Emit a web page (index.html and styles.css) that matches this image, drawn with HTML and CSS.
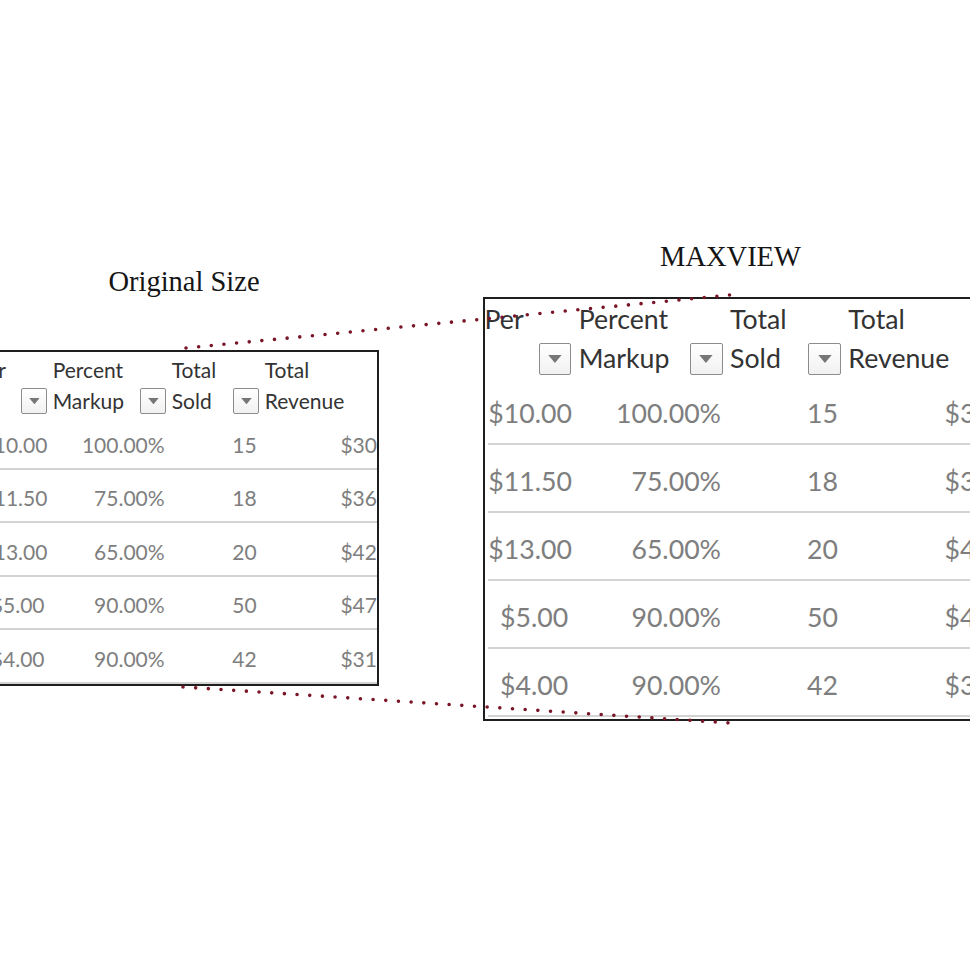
FILE: index.html
```html
<!DOCTYPE html>
<html lang="en">
<head>
<meta charset="utf-8">
<title>Original Size vs MAXVIEW</title>
<link rel="stylesheet" href="styles.css">
</head>
<body>
<div class="stage">
  <figure class="figure figure--original">
    <figcaption class="caption">Original Size</figcaption>
    <div class="sheet sheet--small">
      <div class="sheet__head">
        <div class="hcell"><span class="hcell__line"><span class="hcell__clip">Per</span></span><span class="hcell__line"><span class="dd"><svg viewBox="0 0 10 6"><path d="M0 0H10L5 6Z"/></svg></span></span></div>
        <div class="hcell"><span class="hcell__line">Percent</span><span class="hcell__line">Markup<span class="dd"><svg viewBox="0 0 10 6"><path d="M0 0H10L5 6Z"/></svg></span></span></div>
        <div class="hcell"><span class="hcell__line">Total</span><span class="hcell__line">Sold<span class="dd"><svg viewBox="0 0 10 6"><path d="M0 0H10L5 6Z"/></svg></span></span></div>
        <div class="hcell"><span class="hcell__line">Total</span><span class="hcell__line">Revenue<span class="dd"><svg viewBox="0 0 10 6"><path d="M0 0H10L5 6Z"/></svg></span></span></div>
      </div>
      <div class="sheet__row"><span class="cell cell--c1">$10.00</span><span class="cell cell--c2">100.00%</span><span class="cell cell--c3">15</span><span class="cell cell--c4">$300.00</span></div>
      <div class="sheet__row"><span class="cell cell--c1">$11.50</span><span class="cell cell--c2">75.00%</span><span class="cell cell--c3">18</span><span class="cell cell--c4">$362.25</span></div>
      <div class="sheet__row"><span class="cell cell--c1">$13.00</span><span class="cell cell--c2">65.00%</span><span class="cell cell--c3">20</span><span class="cell cell--c4">$429.00</span></div>
      <div class="sheet__row"><span class="cell cell--c1">$5.00</span><span class="cell cell--c2">90.00%</span><span class="cell cell--c3">50</span><span class="cell cell--c4">$475.00</span></div>
      <div class="sheet__row"><span class="cell cell--c1">$4.00</span><span class="cell cell--c2">90.00%</span><span class="cell cell--c3">42</span><span class="cell cell--c4">$319.20</span></div>
    </div>
  </figure>

  <figure class="figure figure--maxview">
    <figcaption class="caption">MAXVIEW</figcaption>
    <div class="sheet sheet--large">
      <div class="sheet__head">
        <div class="hcell"><span class="hcell__line"><span class="hcell__clip">Per</span></span><span class="hcell__line"><span class="dd"><svg viewBox="0 0 10 6"><path d="M0 0H10L5 6Z"/></svg></span></span></div>
        <div class="hcell"><span class="hcell__line">Percent</span><span class="hcell__line">Markup<span class="dd"><svg viewBox="0 0 10 6"><path d="M0 0H10L5 6Z"/></svg></span></span></div>
        <div class="hcell"><span class="hcell__line">Total</span><span class="hcell__line">Sold<span class="dd"><svg viewBox="0 0 10 6"><path d="M0 0H10L5 6Z"/></svg></span></span></div>
        <div class="hcell"><span class="hcell__line">Total</span><span class="hcell__line">Revenue<span class="dd"><svg viewBox="0 0 10 6"><path d="M0 0H10L5 6Z"/></svg></span></span></div>
      </div>
      <div class="sheet__row"><span class="cell cell--c1">$10.00</span><span class="cell cell--c2">100.00%</span><span class="cell cell--c3">15</span><span class="cell cell--c4">$300.00</span></div>
      <div class="sheet__row"><span class="cell cell--c1">$11.50</span><span class="cell cell--c2">75.00%</span><span class="cell cell--c3">18</span><span class="cell cell--c4">$362.25</span></div>
      <div class="sheet__row"><span class="cell cell--c1">$13.00</span><span class="cell cell--c2">65.00%</span><span class="cell cell--c3">20</span><span class="cell cell--c4">$429.00</span></div>
      <div class="sheet__row"><span class="cell cell--c1">$5.00</span><span class="cell cell--c2">90.00%</span><span class="cell cell--c3">50</span><span class="cell cell--c4">$475.00</span></div>
      <div class="sheet__row"><span class="cell cell--c1">$4.00</span><span class="cell cell--c2">90.00%</span><span class="cell cell--c3">42</span><span class="cell cell--c4">$319.20</span></div>
    </div>
  </figure>

  <svg class="connectors" viewBox="0 0 970 971" aria-hidden="true">
    <line x1="186" y1="348" x2="730" y2="295"/>
    <line x1="183" y1="687" x2="730" y2="723"/>
  </svg>
</div>
</body>
</html>
```

FILE: styles.css
```css
* { box-sizing: border-box; }

html, body {
  margin: 0;
  padding: 0;
  background: #ffffff;
}

.stage {
  position: relative;
  width: 970px;
  height: 971px;
  overflow: hidden;
  background: #ffffff;
}

.figure {
  position: absolute;
  margin: 0;
}

.figure--original {
  left: -23px;
  top: 266px;
  width: 402px;
}

.figure--maxview {
  left: 483px;
  top: 241px;
  width: 509px;
}

.caption {
  font-family: "Liberation Serif", "DejaVu Serif", serif;
  font-size: 28.5px;
  line-height: 32px;
  color: #151515;
  text-align: center;
}

.figure--original .caption {
  padding-left: 12px;
  margin-bottom: 52px;
}

.figure--maxview .caption {
  padding-right: 14px;
  margin-bottom: 24px;
}

.sheet {
  border: 2px solid #1e1e1e;
  overflow: hidden;
  font-family: Lato, "Open Sans", sans-serif;
  background: #ffffff;
}

.sheet--small {
  font-size: 21px;
}

.sheet--large {
  font-size: 26.7px;
  padding-bottom: 2px;
}

.sheet__head,
.sheet__row {
  display: grid;
  grid-template-columns: 3.19em 5.67em 4.43em 8em;
  margin: 0 0.12em;
  width: 21.3em;
}

.sheet__head {
  height: 3.05em;
  padding-top: 0.12em;
  color: #333333;
  line-height: 1.476;
}

.sheet--large .sheet__head {
  height: 2.92em;
  padding-top: 0.04em;
}

.hcell {
  display: flex;
  flex-direction: column;
  padding-left: 0.2em;
  padding-right: 0.08em;
  white-space: nowrap;
}

.sheet__head .hcell:first-child {
  padding-left: 0;
}

.hcell__clip {
  margin-left: -0.3em;
}

.sheet--large .hcell__clip {
  margin-left: -0.14em;
}

.hcell__line {
  display: flex;
  align-items: center;
  height: 1.476em;
}

.dd {
  margin-left: auto;
  width: 1.22em;
  height: 1.2em;
  border: 1px solid #8c8c8c;
  border-radius: 2px;
  background: linear-gradient(#ffffff, #f1f1f1);
  display: flex;
  align-items: center;
  justify-content: center;
}

.dd svg {
  width: 0.52em;
  height: 0.3em;
  fill: #767676;
}

.sheet__row {
  height: 2.55em;
  padding-top: 0.74em;
  border-bottom: 0.1em solid #d3d3d3;
  line-height: 1.2;
  color: #7e7e7e;
  white-space: nowrap;
}

.cell--c1 {
  text-align: right;
  padding-right: 0.19em;
}

.cell--c2 {
  text-align: right;
  padding-right: 0.14em;
}

.cell--c3 {
  text-align: right;
  padding-right: 0.19em;
}

.cell--c4 {
  text-align: left;
  padding-left: 3.8em;
}

.connectors {
  position: absolute;
  left: 0;
  top: 0;
  width: 970px;
  height: 971px;
  pointer-events: none;
}

.connectors line {
  stroke: #7a1526;
  stroke-width: 3.6;
  stroke-linecap: round;
  stroke-dasharray: 0 12.7;
}
```
